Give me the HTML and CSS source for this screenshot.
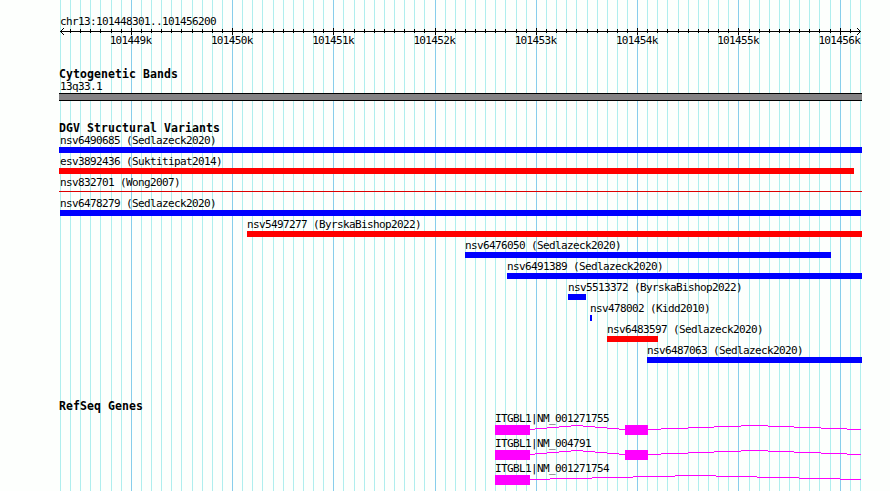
FILE: index.html
```
<!DOCTYPE html>
<html lang="en">
<head>
<meta charset="utf-8">
<title>chr13:101448301..101456200</title>
<link rel="stylesheet" href="styles.css">
</head>
<body>
<main class="browser">
<svg class="grid" id="grid" width="890" height="491" shape-rendering="crispEdges" aria-hidden="true"></svg>
<header class="scale">
<p class="label region">chr13:101448301..101456200</p>
<svg class="ruler" id="ruler" width="890" height="7" shape-rendering="crispEdges" aria-hidden="true"></svg>
<div class="ticks" id="ticks"></div>
</header>
<section class="track bands">
<h2>Cytogenetic Bands</h2>
<p class="label first">13q33.1</p>
<div class="band"></div>
</section>
<section class="track variants">
<h2>DGV Structural Variants</h2>
<div id="variants"></div>
</section>
<section class="track genes">
<h2>RefSeq Genes</h2>
<div id="genes"></div>
</section>
</main>
<script src="script.js"></script>
</body>
</html>
```
FILE: styles.css
```
* { box-sizing: border-box; }
body { margin: 0; background: #fdfffd; color: #000; }
.browser {
  position: relative;
  width: 890px;
  height: 491px;
  overflow: hidden;
  font-family: "DejaVu Sans Mono", monospace;
}
.grid { position: absolute; inset: 0; z-index: -1; }
.minor { fill: #afeeee; }
.major { fill: #87ceeb; }
p, h2 { margin: 0; }
h2, .label {
  height: 12px;
  line-height: 14px;
  font-size: 11px;
  letter-spacing: -0.623px;
  white-space: pre;
}
h2 { font-size: 11.5px; line-height: 12px; letter-spacing: 0.077px; font-weight: bold; }
.scale { padding-top: 15px; height: 68px; }
.region { margin-left: 60px; }
.ruler { display: block; margin-top: 1px; }
.ticks {
  display: grid;
  grid-template-columns: repeat(8, 101.25px);
  margin-left: 80px;
}
.ticks .label { text-align: center; line-height: 12px; }
.track { padding-left: 59px; }
.bands { height: 54px; }
.track .first { padding-left: 1px; }
.band {
  width: 803px;
  height: 8px;
  margin-top: 1px;
  border: solid #000;
  border-width: 1px 0;
  background: #848284;
}
.variants { height: 278px; }
.variant { height: 21px; }
.bar { height: 6px; margin-top: 1px; }
.gain { background: #00f; }
.loss { background: #f00; }
.thin { height: 1px; margin-top: 3px; background: #dd0000; }
.gene { height: 25px; }
.gene svg { display: block; margin-top: 1px; fill: #f0f; }
```
FILE: script.js
```
const majors = [131, 232, 333, 435, 536, 637, 738, 840];
const lines = [60,70,80,90,100,111,121,131,141,151,161,171,181,192,202,212,222,232,242,252,262,273,283,293,303,313,323,333,343,354,364,374,384,394,404,414,424,435,445,455,465,475,485,495,505,516,526,536,546,556,566,576,587,597,607,617,627,637,647,657,667,678,688,698,708,718,728,738,749,759,769,779,789,799,809,819,830,840,850,860];
const rect = (x, y, w, h, c = "") => `<rect x="${x}" y="${y}" width="${w}" height="${h}" class="${c}"/>`;
const byId = id => document.getElementById(id);

byId("grid").innerHTML = lines.map(x => rect(x, 0, 1, 491, majors.includes(x) ? "major" : "minor")).join("");

byId("ruler").innerHTML = rect(60, 3, 801, 1) +
  lines.slice(1, -1).map(x => majors.includes(x) ? rect(x, 0, 1, 7) : rect(x, 1, 1, 4)).join("") +
  [1, 2, 3].map(d => rect(60 + d, 3 - d, 1, 1) + rect(60 + d, 3 + d, 1, 1) +
    rect(860 - d, 3 - d, 1, 1) + rect(860 - d, 3 + d, 1, 1)).join("");

byId("ticks").innerHTML = majors.map((_, i) => `<p class="label">${101449 + i}k</p>`).join("");

const variants = [
  ["nsv6490685 (Sedlazeck2020)", 59, 862, "gain"],
  ["esv3892436 (Suktitipat2014)", 59, 854, "loss"],
  ["nsv832701 (Wong2007)", 59, 862, "thin"],
  ["nsv6478279 (Sedlazeck2020)", 60, 861, "gain"],
  ["nsv5497277 (ByrskaBishop2022)", 247, 862, "loss"],
  ["nsv6476050 (Sedlazeck2020)", 465, 831, "gain"],
  ["nsv6491389 (Sedlazeck2020)", 507, 862, "gain"],
  ["nsv5513372 (ByrskaBishop2022)", 568, 586, "gain"],
  ["nsv478002 (Kidd2010)", 590, 592, "gain"],
  ["nsv6483597 (Sedlazeck2020)", 607, 658, "loss"],
  ["nsv6487063 (Sedlazeck2020)", 647, 862, "gain"]
];
byId("variants").innerHTML = variants.map(([name, start, end, type]) =>
  `<div class="variant" style="margin-left:${start - 59}px"><p class="label${start === 59 ? " first" : ""}">${name}</p><div class="bar ${type}" style="width:${end - start}px"></div></div>`).join("");

// Intron steps: [start, end, height above the exon midline]
const far = [[648,661,0],[661,688,1],[688,714,2],[714,741,3],[741,768,4],[768,794,3],[794,821,2],[821,847,1],[847,861,0]];
const near = [[530,535,0],[535,547,1],[547,559,2],[559,571,3],[571,583,4],[583,595,3],[595,607,2],[607,619,1],[619,625,0]];
const single = [[530,550,0],[550,592,1],[592,633,2],[633,675,3],[675,716,4],[716,757,3],[757,799,2],[799,840,1],[840,861,0]];
const genes = [
  ["ITGBL1|NM_001271755", [[495,530],[625,648]], [...near, ...far]],
  ["ITGBL1|NM_004791", [[495,530],[625,648]], [...near, ...far]],
  ["ITGBL1|NM_001271754", [[495,530]], single]
];
byId("genes").innerHTML = genes.map(([name, exons, introns]) =>
  `<div class="gene" style="margin-left:436px"><p class="label">${name}</p><svg width="367" height="10" shape-rendering="crispEdges">` +
  exons.map(([a, b]) => rect(a - 495, 0, b - a, 10)).join("") +
  introns.map(([a, b, h]) => rect(a - 495, 4 - h, b - a, 1)).join("") + `</svg></div>`).join("");
```
